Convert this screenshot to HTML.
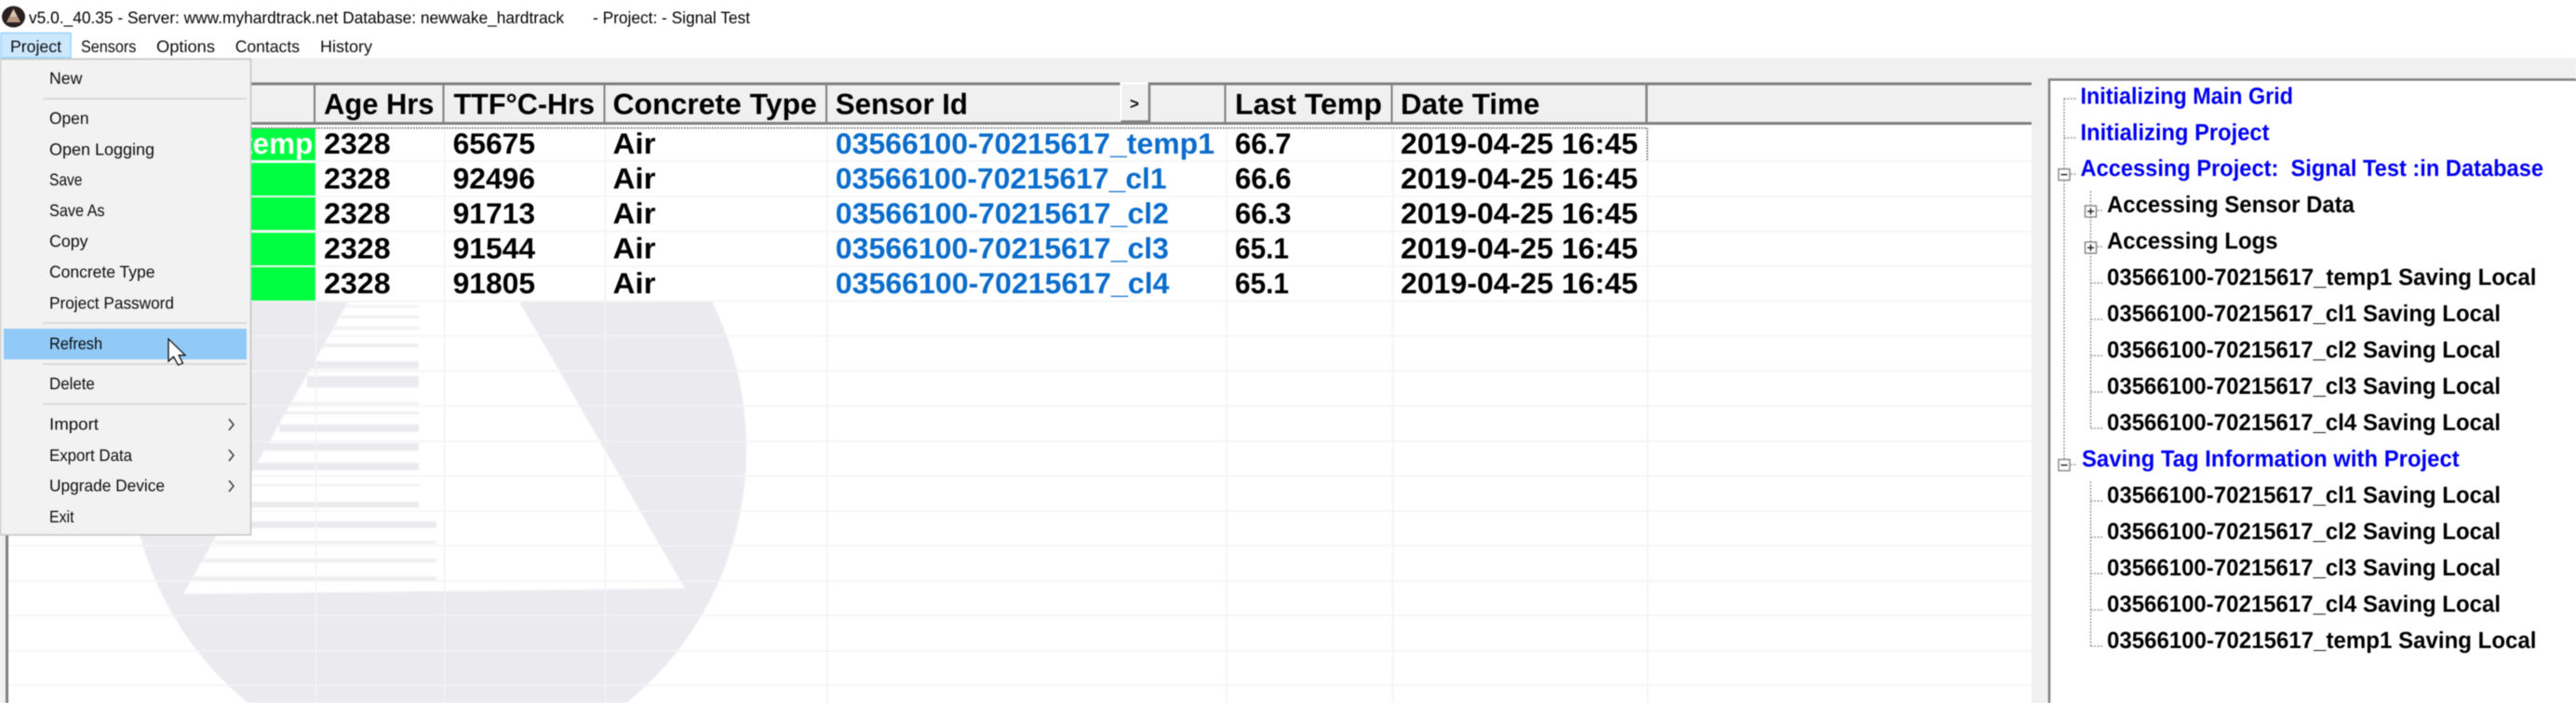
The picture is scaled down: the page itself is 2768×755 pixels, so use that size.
<!DOCTYPE html>
<html><head><meta charset="utf-8"><title>v5.0._40.35</title>
<style>
html,body{margin:0;padding:0;background:#fff;width:2768px;height:755px;overflow:hidden}
#w{position:absolute;left:0;top:0;width:2768px;height:755px;overflow:hidden}
svg{display:block;filter:blur(.4px)}
text{font-family:"Liberation Sans",Arial,sans-serif;white-space:pre;text-rendering:geometricPrecision}
.g{font-size:31.500px;font-weight:700;fill:#000}
.s{font-size:31.500px;font-weight:700;fill:#0a6ccb}
.t{font-size:25px;font-weight:700;fill:#000}
.b{font-size:25px;font-weight:700;fill:#0000f0}
.m{font-size:18px;fill:#0c0c0c}
.ti{font-size:18px;fill:#000}
.hl{stroke:#f3f3f3;stroke-width:1.500;fill:none}
.d{stroke:#9a9a9a;stroke-width:1.500;stroke-dasharray:2 1.500;fill:none}
.box{fill:#fff;stroke:#8a8a8a;stroke-width:1.500}
</style></head><body><div id="w">
<svg width="2768" height="755" viewBox="0 0 2768 755" xmlns="http://www.w3.org/2000/svg">
<defs>
<filter id="bl"><feGaussianBlur stdDeviation="0.8"/></filter>
</defs>
<rect width="2768" height="755" fill="#fff"/>
<!-- toolbar band -->
<rect x="0" y="62" width="2768" height="28" fill="#f0f0f0"/>
<rect x="0" y="90" width="9" height="665" fill="#f0f0f0"/>
<rect x="2183" y="85" width="585" height="670" fill="#f0f0f0"/>
<!-- watermark -->
<g filter="url(#bl)">
<path d="M175 324A332 345 0 0 0 267 755L673 755A332 345 0 0 0 765 324Z" fill="#eaeaef"/>
<polygon points="374,324 558,324 736,632 197,638" fill="#fff"/>
<g fill="#f0edee">
<rect x="372" y="328" width="78" height="2"/>
<rect x="366" y="339" width="84" height="3"/>
<rect x="358" y="351" width="92" height="3"/>
<rect x="346" y="369" width="104" height="4"/>
<rect x="310" y="432" width="140" height="3"/>
<rect x="300" y="442" width="150" height="3"/>
<rect x="260" y="520" width="190" height="2"/>
<rect x="230" y="581" width="239" height="3"/>
<rect x="218" y="600" width="251" height="4"/>
<rect x="205" y="619" width="264" height="5"/>
</g>
<g fill="#eaeaef">
<rect x="330" y="388" width="120" height="8"/>
<rect x="330" y="404" width="120" height="12"/>
<rect x="300" y="456" width="150" height="8"/>
<rect x="285" y="476" width="165" height="8"/>
<rect x="270" y="497" width="180" height="8"/>
<rect x="250" y="539" width="200" height="6"/>
<rect x="235" y="560" width="234" height="7"/>
</g>
</g>
<!-- green column -->
<g fill="#00ff41">
<rect x="0" y="138" width="339" height="34"/>
<rect x="0" y="175" width="339" height="35"/>
<rect x="0" y="212" width="339" height="35"/>
<rect x="0" y="250" width="339" height="35"/>
<rect x="0" y="287" width="339" height="36"/>
</g>
<!-- grid lines -->
<g class="hl">
<path d="M9 173H2183M9 211H2183M9 248.500H2183M9 286H2183M9 323.500H2183M9 361H2183M9 398.500H2183M9 436H2183M9 474H2183M9 511H2183M9 549H2183M9 586H2183M9 624H2183M9 661H2183M9 699H2183M9 736H2183"/>
<path d="M339.500 136V755M477.500 136V755M650.500 136V755M889 136V755M1318 136V755M1496.500 136V755M1770.500 136V755"/>
</g>
<rect x="6" y="90" width="3" height="665" fill="#808080"/>
<!-- header -->
<rect x="6" y="90" width="2177" height="44" fill="#f0f0f0"/>
<rect x="6" y="88.500" width="2177" height="3" fill="#808080"/>
<rect x="6" y="131" width="2177" height="3" fill="#808080"/>
<g fill="#808080">
<rect x="337" y="91" width="2" height="41"/>
<rect x="475.500" y="91" width="2" height="41"/>
<rect x="648.500" y="91" width="2" height="41"/>
<rect x="887" y="91" width="2" height="41"/>
<rect x="1315.500" y="91" width="2" height="41"/>
<rect x="1494.500" y="91" width="2" height="41"/>
<rect x="1768" y="91" width="2.500" height="41"/>
</g>
<!-- focus dots -->
<path d="M6 137.500H1770M1770 137.500V172" stroke="#555" stroke-width="1.500" stroke-dasharray="1.500 1.500" fill="none"/>
<!-- header text -->
<text class="g" x="348" y="122.700" textLength="118.500" lengthAdjust="spacingAndGlyphs">Age Hrs</text>
<text class="g" x="487.500" y="122.700" textLength="151.500" lengthAdjust="spacingAndGlyphs">TTF°C-Hrs</text>
<text class="g" x="658.500" y="122.700" textLength="219.200" lengthAdjust="spacingAndGlyphs">Concrete Type</text>
<text class="g" x="897.800" y="122.700" textLength="142.200" lengthAdjust="spacingAndGlyphs">Sensor Id</text>
<text class="g" x="1327" y="122.700" textLength="158" lengthAdjust="spacingAndGlyphs">Last Temp</text>
<text class="g" x="1505" y="122.700" textLength="149.500" lengthAdjust="spacingAndGlyphs">Date Time</text>
<!-- > button -->
<rect x="1204.500" y="89" width="30.500" height="42" fill="#f0f0f0"/>
<path d="M1204.500 130V89.500H1234" stroke="#fff" stroke-width="2" fill="none"/>
<path d="M1204.500 130.500H1235V89" stroke="#808080" stroke-width="2.500" fill="none"/>
<text x="1214" y="117" style="font-size:17px;font-weight:700;fill:#111">&gt;</text>
<!-- rows -->
<text x="261" y="165" style="font-size:31.500px;font-weight:700;fill:#fff">temp</text>
<g>
<text class="g" x="348" y="165" textLength="71.600" lengthAdjust="spacingAndGlyphs">2328</text>
<text class="g" x="348" y="202.500" textLength="71.600" lengthAdjust="spacingAndGlyphs">2328</text>
<text class="g" x="348" y="240" textLength="71.600" lengthAdjust="spacingAndGlyphs">2328</text>
<text class="g" x="348" y="277.500" textLength="71.600" lengthAdjust="spacingAndGlyphs">2328</text>
<text class="g" x="348" y="315" textLength="71.600" lengthAdjust="spacingAndGlyphs">2328</text>
<text class="g" x="486.600" y="165" textLength="88.500" lengthAdjust="spacingAndGlyphs">65675</text>
<text class="g" x="486.600" y="202.500" textLength="88.500" lengthAdjust="spacingAndGlyphs">92496</text>
<text class="g" x="486.600" y="240" textLength="88.500" lengthAdjust="spacingAndGlyphs">91713</text>
<text class="g" x="486.600" y="277.500" textLength="88.500" lengthAdjust="spacingAndGlyphs">91544</text>
<text class="g" x="486.600" y="315" textLength="88.500" lengthAdjust="spacingAndGlyphs">91805</text>
<text class="g" x="658.500" y="165" textLength="46" lengthAdjust="spacingAndGlyphs">Air</text>
<text class="g" x="658.500" y="202.500" textLength="46" lengthAdjust="spacingAndGlyphs">Air</text>
<text class="g" x="658.500" y="240" textLength="46" lengthAdjust="spacingAndGlyphs">Air</text>
<text class="g" x="658.500" y="277.500" textLength="46" lengthAdjust="spacingAndGlyphs">Air</text>
<text class="g" x="658.500" y="315" textLength="46" lengthAdjust="spacingAndGlyphs">Air</text>
<text class="s" x="897.800" y="165" textLength="407.200" lengthAdjust="spacingAndGlyphs">03566100-70215617_temp1</text>
<text class="s" x="897.800" y="202.500" textLength="355.800" lengthAdjust="spacingAndGlyphs">03566100-70215617_cl1</text>
<text class="s" x="897.800" y="240" textLength="358.200" lengthAdjust="spacingAndGlyphs">03566100-70215617_cl2</text>
<text class="s" x="897.800" y="277.500" textLength="358.200" lengthAdjust="spacingAndGlyphs">03566100-70215617_cl3</text>
<text class="s" x="897.800" y="315" textLength="358.700" lengthAdjust="spacingAndGlyphs">03566100-70215617_cl4</text>
<text class="g" x="1327" y="165" textLength="60.500" lengthAdjust="spacingAndGlyphs">66.7</text>
<text class="g" x="1327" y="202.500" textLength="60.500" lengthAdjust="spacingAndGlyphs">66.6</text>
<text class="g" x="1327" y="240" textLength="60.500" lengthAdjust="spacingAndGlyphs">66.3</text>
<text class="g" x="1327" y="277.500" textLength="58" lengthAdjust="spacingAndGlyphs">65.1</text>
<text class="g" x="1327" y="315" textLength="58" lengthAdjust="spacingAndGlyphs">65.1</text>
<text class="g" x="1505" y="165" textLength="255" lengthAdjust="spacingAndGlyphs">2019-04-25 16:45</text>
<text class="g" x="1505" y="202.500" textLength="255" lengthAdjust="spacingAndGlyphs">2019-04-25 16:45</text>
<text class="g" x="1505" y="240" textLength="255" lengthAdjust="spacingAndGlyphs">2019-04-25 16:45</text>
<text class="g" x="1505" y="277.500" textLength="255" lengthAdjust="spacingAndGlyphs">2019-04-25 16:45</text>
<text class="g" x="1505" y="315" textLength="255" lengthAdjust="spacingAndGlyphs">2019-04-25 16:45</text>
</g>
<!-- tree -->
<rect x="2202" y="85.500" width="566" height="669.500" fill="#fff"/>
<path d="M2202 755V85.500H2768" stroke="#808080" stroke-width="2.500" fill="none"/>
<path class="d" d="M2218 106V493M2218 106H2231M2218 148H2231M2218 187H2231M2218 499H2231"/>
<path class="d" d="M2246.500 205V460M2246.500 226H2259M2246.500 265H2259M2246.500 304H2259M2246.500 343H2259M2246.500 382H2259M2246.500 421H2259M2246.500 460H2259"/>
<path class="d" d="M2246.500 517V694M2246.500 538H2259M2246.500 577H2259M2246.500 616H2259M2246.500 655H2259M2246.500 694H2259"/>
<rect class="box" x="2212" y="181.500" width="12" height="12"/><path d="M2214.500 187.500H2221.500" stroke="#222" stroke-width="1.500"/>
<rect class="box" x="2212" y="493.500" width="12" height="12"/><path d="M2214.500 499.500H2221.500" stroke="#222" stroke-width="1.500"/>
<rect class="box" x="2240.500" y="221" width="12" height="12"/><path d="M2243 227H2250M2246.500 223.500V230.500" stroke="#222" stroke-width="1.500"/>
<rect class="box" x="2240.500" y="260" width="12" height="12"/><path d="M2243 266H2250M2246.500 262.500V269.500" stroke="#222" stroke-width="1.500"/>
<text class="b" x="2235.500" y="111.500" textLength="228.500" lengthAdjust="spacingAndGlyphs">Initializing Main Grid</text>
<text class="b" x="2235.500" y="150.500" textLength="203" lengthAdjust="spacingAndGlyphs">Initializing Project</text>
<text class="b" x="2235.500" y="189" textLength="497.500" lengthAdjust="spacingAndGlyphs">Accessing Project:  Signal Test :in Database</text>
<text class="t" x="2264" y="228" textLength="266" lengthAdjust="spacingAndGlyphs">Accessing Sensor Data</text>
<text class="t" x="2264" y="267" textLength="183.600" lengthAdjust="spacingAndGlyphs">Accessing Logs</text>
<text class="t" x="2264" y="306" textLength="461.500" lengthAdjust="spacingAndGlyphs">03566100-70215617_temp1 Saving Local</text>
<text class="t" x="2264" y="345" textLength="423" lengthAdjust="spacingAndGlyphs">03566100-70215617_cl1 Saving Local</text>
<text class="t" x="2264" y="384" textLength="423" lengthAdjust="spacingAndGlyphs">03566100-70215617_cl2 Saving Local</text>
<text class="t" x="2264" y="423" textLength="423" lengthAdjust="spacingAndGlyphs">03566100-70215617_cl3 Saving Local</text>
<text class="t" x="2264" y="462" textLength="423" lengthAdjust="spacingAndGlyphs">03566100-70215617_cl4 Saving Local</text>
<text class="b" x="2237" y="501" textLength="405.700" lengthAdjust="spacingAndGlyphs">Saving Tag Information with Project</text>
<text class="t" x="2264" y="540" textLength="423" lengthAdjust="spacingAndGlyphs">03566100-70215617_cl1 Saving Local</text>
<text class="t" x="2264" y="579" textLength="423" lengthAdjust="spacingAndGlyphs">03566100-70215617_cl2 Saving Local</text>
<text class="t" x="2264" y="618" textLength="423" lengthAdjust="spacingAndGlyphs">03566100-70215617_cl3 Saving Local</text>
<text class="t" x="2264" y="657" textLength="423" lengthAdjust="spacingAndGlyphs">03566100-70215617_cl4 Saving Local</text>
<text class="t" x="2264" y="696" textLength="461.500" lengthAdjust="spacingAndGlyphs">03566100-70215617_temp1 Saving Local</text>
<!-- title bar -->
<ellipse cx="14.500" cy="18" rx="12.500" ry="11.500" fill="#2a2020"/>
<polygon points="14.500,9.500 7,24 22,24" fill="#d9c6b0"/>
<polygon points="10,18 19,18 22,24 7,24" fill="#b89a80"/>
<text class="ti" x="31" y="25" textLength="575" lengthAdjust="spacingAndGlyphs">v5.0._40.35 - Server: www.myhardtrack.net Database: newwake_hardtrack</text>
<text class="ti" x="637" y="25" textLength="169" lengthAdjust="spacingAndGlyphs">- Project: - Signal Test</text>
<!-- menu bar -->
<rect x="1" y="35.500" width="75" height="26.500" fill="#cce8ff" stroke="#99d1ff" stroke-width="1.500"/>
<text class="m" x="11" y="56" textLength="55" lengthAdjust="spacingAndGlyphs">Project</text>
<text class="m" x="87" y="56" textLength="59.400" lengthAdjust="spacingAndGlyphs">Sensors</text>
<text class="m" x="168" y="56" textLength="63" lengthAdjust="spacingAndGlyphs">Options</text>
<text class="m" x="252.700" y="56" textLength="69.300" lengthAdjust="spacingAndGlyphs">Contacts</text>
<text class="m" x="344" y="56" textLength="56" lengthAdjust="spacingAndGlyphs">History</text>
<!-- dropdown -->
<rect x="0.500" y="63.500" width="269" height="511" fill="#f2f2f2" stroke="#c4c4c4" stroke-width="1.500"/>
<g fill="#d9d9d9">
<rect x="46" y="105" width="219" height="2"/>
<rect x="46" y="346" width="219" height="2"/>
<rect x="46" y="390" width="219" height="2"/>
<rect x="46" y="433" width="219" height="2"/>
</g>
<rect x="4" y="353" width="261" height="33" fill="#91c9f7"/>
<text class="m" x="53" y="90" textLength="35.400" lengthAdjust="spacingAndGlyphs">New</text>
<text class="m" x="53" y="133" textLength="42.500" lengthAdjust="spacingAndGlyphs">Open</text>
<text class="m" x="53" y="166.500" textLength="113" lengthAdjust="spacingAndGlyphs">Open Logging</text>
<text class="m" x="53" y="199" textLength="35.400" lengthAdjust="spacingAndGlyphs">Save</text>
<text class="m" x="53" y="232" textLength="59.500" lengthAdjust="spacingAndGlyphs">Save As</text>
<text class="m" x="53" y="265" textLength="41.600" lengthAdjust="spacingAndGlyphs">Copy</text>
<text class="m" x="53" y="298" textLength="113.500" lengthAdjust="spacingAndGlyphs">Concrete Type</text>
<text class="m" x="53" y="331.500" textLength="134" lengthAdjust="spacingAndGlyphs">Project Password</text>
<text class="m" x="53" y="375" textLength="57" lengthAdjust="spacingAndGlyphs">Refresh</text>
<text class="m" x="53" y="418" textLength="48.800" lengthAdjust="spacingAndGlyphs">Delete</text>
<text class="m" x="53" y="461.500" textLength="53" lengthAdjust="spacingAndGlyphs">Import</text>
<text class="m" x="53" y="495" textLength="89" lengthAdjust="spacingAndGlyphs">Export Data</text>
<text class="m" x="53" y="527.500" textLength="124" lengthAdjust="spacingAndGlyphs">Upgrade Device</text>
<text class="m" x="53" y="561" textLength="26.500" lengthAdjust="spacingAndGlyphs">Exit</text>
<path d="M246 450L251 456L246 462M246 483L251 489L246 495M246 516L251 522L246 528" stroke="#333" stroke-width="1.400" fill="none"/>
<!-- cursor -->
<path d="M181 364V388L186.500 383L191.500 392L196.500 390L192 381.500H199Z" fill="#fff" stroke="#000" stroke-width="1.200" stroke-linejoin="miter"/>
</svg>
</div></body></html>
